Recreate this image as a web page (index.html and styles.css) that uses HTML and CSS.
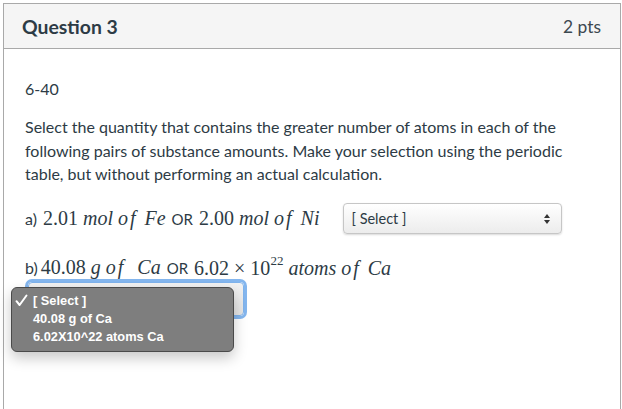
FILE: index.html
```html
<!DOCTYPE html>
<html>
<head>
<meta charset="utf-8">
<link rel="stylesheet" href="styles.css">
</head>
<body>
<div class="card">
  <div class="card-header">
    <span class="q-title">Question 3</span>
    <span class="q-pts">2 pts</span>
  </div>
  <div class="card-body">
    <p class="code">6-40</p>
    <p class="prompt">Select the quantity that contains the greater number of atoms in each of the following pairs of substance amounts. Make your selection using the periodic table, but without performing an actual calculation.</p>
    <div class="row row-a">
      <span class="lbl">a)</span>
      <span class="math"><span class="up">2.01</span> <i>mol</i> <i>o</i><i class="f">f</i> <i>Fe</i></span>
      <span class="or">OR</span>
      <span class="math"><span class="up">2.00</span> <i>mol</i> <i>o</i><i class="f">f</i> <i>Ni</i></span>
      <div class="sel">
        <span class="sel-text">[ Select ]</span>
        <svg class="arrows" width="8" height="12" viewBox="0 0 8 12"><path d="M4 1 L7 5 L1 5 Z M4 11 L7 7 L1 7 Z" fill="#333"/></svg>
      </div>
    </div>
    <div class="row row-b">
      <span class="lbl lbl-b">b)</span>
      <span class="math"><span class="up">40.08</span> <i>g</i> <i>o</i><i class="f">f</i>&nbsp; <i>Ca</i></span>
      <span class="or">OR</span>
      <span class="math"><span class="up">6.02 × 10<sup>22</sup></span> <i>atoms</i> <i>o</i><i class="f">f</i> <i>Ca</i></span>
    </div>
    <div class="sel-wrap">
      <div class="sel sel-b focus">
        <span class="sel-text"></span>
        <svg class="arrows" width="8" height="12" viewBox="0 0 8 12"><path d="M4 1 L7 5 L1 5 Z M4 11 L7 7 L1 7 Z" fill="#333"/></svg>
      </div>
      <div class="menu">
        <div class="opt"><svg class="check" width="13" height="13" viewBox="0 0 13 13"><path d="M1.5 7.2 L4.6 11 L11.5 1.5" fill="none" stroke="#fff" stroke-width="2" stroke-linecap="round" stroke-linejoin="round"/></svg>[ Select ]</div>
        <div class="opt">40.08 g of Ca</div>
        <div class="opt">6.02X10^22 atoms Ca</div>
      </div>
    </div>
  </div>
</div>
</body>
</html>
```

FILE: styles.css
```css
* { box-sizing: border-box; }
html, body { margin: 0; padding: 0; background: #fff; }
body { font-family: Lato, "Liberation Sans", sans-serif; color: #2d3b45; }
.card {
  margin: 3px 1px 0 3px;
  border: 1px solid #a9a9a9;
  border-bottom: none;
  height: 406px;
}
.card-header {
  display: flex;
  justify-content: space-between;
  align-items: center;
  height: 45px;
  background: #f5f5f5;
  border-bottom: 1px solid #a9a9a9;
  padding: 0 19px 0 18px;
}
.q-title { font-size: 19.4px; font-weight: 700; color: #2d3b45; }
.q-pts { font-size: 17.4px; color: #3c4850; }
.card-body { padding: 0 20px 0 21px; }
.code { margin: 28px 0 0; font-size: 16px; line-height: 24px; }
.prompt { margin: 14px 0 0; font-size: 16px; line-height: 23.5px; }
.row { display: flex; align-items: center; font-size: 16px; }
.row-a { margin-top: 17px; height: 32px; }
.row-b { margin-top: 20px; height: 26px; }
.lbl { margin-right: 6px; }
.lbl-b { margin-right: 3px; }
.math { font-family: "Liberation Serif", serif; font-size: 20px; white-space: nowrap; }
.math i { font-style: italic; }
.math .f { margin-left: 2px; margin-right: 4px; }
.math .up { font-style: normal; }
.math sup { font-size: 13px; position: relative; top: -2px; }
.or { font-size: 15px; margin: 0 6px; }
.sel {
  position: relative;
  display: flex;
  align-items: center;
  justify-content: space-between;
  width: 219px;
  height: 31px;
  margin-left: 24px;
  padding: 0 10px 0 7px;
  border: 1px solid #c6c6c6;
  border-radius: 4px;
  background: linear-gradient(#ffffff, #ececec);
  box-shadow: 0 1px 2px rgba(0,0,0,0.15);
  font-size: 14.5px;
  color: #2d3b45;
}
.arrows { display: block; }
.sel-wrap { position: relative; margin-top: 1px; height: 40px; }
.sel-b {
  margin-left: 3px;
  width: 216px;
  height: 34px;
  border-color: #7fb3ec;
  box-shadow: 0 0 0 3px #84b6ee;
  background: linear-gradient(#f2f2f2, #e4e4e4);
}
.menu {
  position: absolute;
  left: -14px;
  top: 5px;
  width: 223px;
  padding: 4px 0 5px;
  background: #7e7e7e;
  border: 1px solid #4a4a4a;
  border-radius: 6px;
  box-shadow: 0 6px 14px rgba(0,0,0,0.22);
  font-family: "Liberation Sans", Arial, sans-serif;
  font-weight: 700;
  font-size: 12.8px;
  color: #fff;
}
.opt { height: 18px; line-height: 18px; padding-left: 21px; position: relative; }
.check { position: absolute; left: 3px; top: 2px; display: block; }
```
